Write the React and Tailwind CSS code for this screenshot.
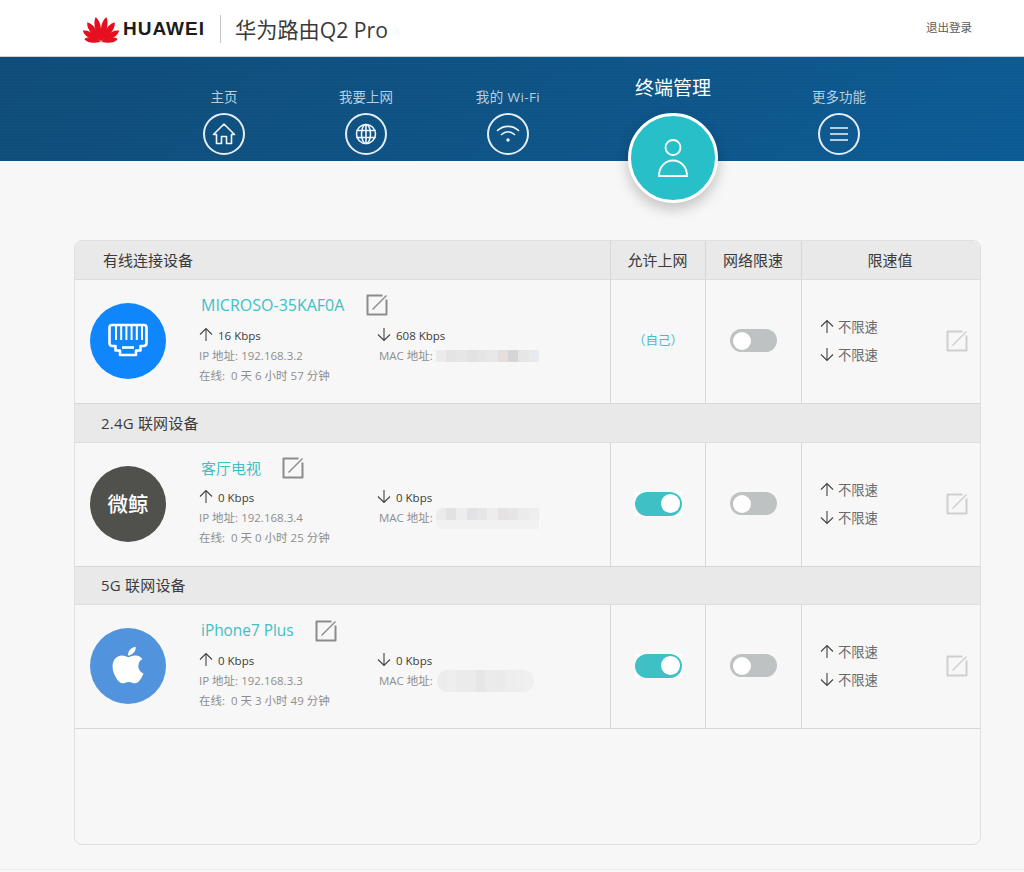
import React from "react";
import { FaApple } from "react-icons/fa";

function HuaweiLogo() {
  const petals = [
    [-12, 25.5, 4.4],
    [-35, 24, 4.6],
    [-58, 21.5, 4.4],
    [-80, 17, 3.6],
    [12, 25.5, 4.4],
    [35, 24, 4.6],
    [58, 21.5, 4.4],
    [80, 17, 3.6],
  ];
  return (
    <svg width="36" height="28" viewBox="0 0 36 28" className="shrink-0">
      {petals.map(([a, l, w], i) => (
        <path
          key={i}
          transform={`rotate(${a} 18 27)`}
          d={`M18 26.5 C${18 - w * 0.45} ${27 - l * 0.3} ${18 - w * 1.25} ${27 - l * 0.72} 18 ${27 - l} C${18 + w * 1.25} ${27 - l * 0.72} ${18 + w * 0.45} ${27 - l * 0.3} 18 26.5Z`}
          fill="#e60f20"
        />
      ))}
    </svg>
  );
}

function CircleIcon({ children }) {
  return (
    <div className="flex h-[42px] w-[42px] items-center justify-center rounded-full border-2 border-[#e4edf3]">
      {children}
    </div>
  );
}

const stroke = {
  fill: "none",
  stroke: "#eef4f8",
  strokeWidth: 1.6,
  strokeLinejoin: "round",
  strokeLinecap: "round",
};

function NavItem({ label, wide, children }) {
  return (
    <div className="flex w-[142px] flex-col items-center pt-[31px]">
      <span className={`h-[18px] text-[13.5px] leading-[18px] text-[#b9cfdf] ${wide ? "tracking-[0.4px]" : ""}`}>{label}</span>
      <div className="mt-[7px]">
        <CircleIcon>{children}</CircleIcon>
      </div>
    </div>
  );
}

function ArrowUp() {
  return (
    <svg width="14" height="15" viewBox="0 0 14 15" className="mb-[3px] shrink-0">
      <path d="M7 14V1.5M1 7.5L7 1.5L13 7.5" fill="none" stroke="#444" strokeWidth="1.1" />
    </svg>
  );
}
function ArrowDown() {
  return (
    <svg width="14" height="15" viewBox="0 0 14 15" className="mb-[3px] shrink-0">
      <path d="M7 1V13.5M1 7.5L7 13.5L13 7.5" fill="none" stroke="#444" strokeWidth="1.1" />
    </svg>
  );
}

function EditIcon({ color = "#8c8c8c" }) {
  return (
    <svg width="22" height="22" viewBox="0 0 22 22" className="shrink-0">
      <path d="M20.5 5.5V20.5H1.5V1.5H16.5" fill="none" stroke={color} strokeWidth="2" strokeLinejoin="round" />
      <path d="M6.5 15.5L20.5 1.5" fill="none" stroke={color} strokeWidth="1.4" />
    </svg>
  );
}

function Toggle({ on }) {
  if (on) {
    return (
      <div className="mb-[2px] bg-white">
        <div className="flex h-[24px] w-[47px] items-center justify-end rounded-full bg-[#3fc0c4] pr-[2px]">
          <div className="h-[19px] w-[19px] rounded-full bg-white" />
        </div>
      </div>
    );
  }
  return (
    <div className="mb-[2px] flex h-[23px] w-[47px] items-center rounded-full bg-[#bfc2c2] pl-[3px]">
      <div className="h-[18px] w-[18px] rounded-full bg-white" />
    </div>
  );
}

function MacBlur({ cells, shape }) {
  if (shape === "fade") {
    return (
      <div className="ml-[3px] flex h-[21px] w-[103px] flex-col overflow-hidden rounded-l-[8px] blur-[0.5px]">
        <div className="flex h-[12px]">
          {cells.map((c, i) => (
            <div key={i} className="h-full flex-1" style={{ backgroundColor: c }} />
          ))}
        </div>
        <div className="h-[9px] bg-[#f1f1f1]" />
      </div>
    );
  }
  if (shape === "pill") {
    return (
      <div className="ml-[4px] flex h-[22px] w-[97px] overflow-hidden rounded-full blur-[0.5px]">
        {cells.map((c, i) => (
          <div key={i} className="h-full flex-1" style={{ backgroundColor: c }} />
        ))}
      </div>
    );
  }
  return (
    <div className="ml-[3px] flex h-[12px] w-[103px] overflow-hidden blur-[0.5px]">
      {cells.map((c, i) => (
        <div key={i} className="h-full flex-1" style={{ backgroundColor: c }} />
      ))}
    </div>
  );
}

function DeviceRow({ avatar, name, nameClass, editGap, up, down, ip, online, self, on, cells, shape, top, gap }) {
  return (
    <div className="grid h-[124px] grid-cols-[536px_95px_96px_1fr] border-b border-[#d5d7d9]">
      <div className="flex border-r border-[#d5d7d9]">
        <div className="ml-[15px] mt-[23px] shrink-0">{avatar}</div>
        <div className={`ml-[33px] flex-1 ${top}`}>
          <div className="flex h-[22px] items-center pl-[2px]">
            <span className={`leading-[22px] text-[#3fc0c6] ${nameClass}`}>{name}</span>
            <div className={editGap}>
              <EditIcon />
            </div>
          </div>
          <div className={`grid grid-cols-[178px_1fr] ${gap}`}>
            <div className="flex h-[20px] items-center gap-[5px] text-[11.5px] text-[#3c3c3c]">
              <ArrowUp />
              <span>{up} Kbps</span>
            </div>
            <div className="flex h-[20px] items-center gap-[5px] text-[11.5px] text-[#3c3c3c]">
              <ArrowDown />
              <span>{down} Kbps</span>
            </div>
            <div className="flex h-[20px] items-center text-[11.5px] text-[#8e8e8e]">IP 地址: {ip}</div>
            <div className="flex h-[20px] items-center pl-[2px] text-[11.5px] text-[#8e8e8e]">
              <span>MAC 地址:</span>
              <MacBlur cells={cells} shape={shape} />
            </div>
            <div className="col-span-2 flex h-[20px] items-center text-[11.5px] text-[#8e8e8e]">
              在线:&nbsp; 0 天 {online}
            </div>
          </div>
        </div>
      </div>
      <div className="flex items-center justify-center border-r border-[#d5d7d9]">
        {self ? <span className="text-[12.5px] text-[#3fc0c6]">（自己）</span> : <Toggle on={on} />}
      </div>
      <div className="flex items-center justify-center border-r border-[#d5d7d9]">
        <Toggle />
      </div>
      <div className="flex items-center justify-between pl-[18px] pr-[12px]">
        <div className="flex flex-col gap-[8px]">
          <div className="flex h-[20px] items-center gap-[4px] text-[13.3px] text-[#6a6a6a]">
            <ArrowUp />
            <span>不限速</span>
          </div>
          <div className="flex h-[20px] items-center gap-[4px] text-[13.3px] text-[#6a6a6a]">
            <ArrowDown />
            <span>不限速</span>
          </div>
        </div>
        <div className="mb-[2px]">
          <EditIcon color="#cfcfcf" />
        </div>
      </div>
    </div>
  );
}

function Section({ height, children }) {
  return (
    <div className={`flex ${height} items-center border-b border-[#dcdee0] bg-[#e9e9e9] pl-[26px] text-[15px] tracking-[0.2px] text-[#3c3c3c]`}>
      {children}
    </div>
  );
}

function Avatar({ bg, children }) {
  return (
    <div className={`flex h-[76px] w-[76px] items-center justify-center rounded-full ${bg}`}>{children}</div>
  );
}

export default function App() {
  return (
    <div className="h-[872px] overflow-hidden bg-[#f7f7f7] font-['Open_Sans','Noto_Sans_CJK_SC',sans-serif]">
      <header className="flex h-[57px] items-center justify-between border-b border-[#c9d2d9] bg-white pl-[83px] pr-[52px]">
        <div className="flex items-center pt-[3px]">
          <HuaweiLogo />
          <span className="ml-[4px] font-['Liberation_Sans',sans-serif] text-[19px] font-bold tracking-[1px] text-[#1c1c1c]">HUAWEI</span>
          <div className="ml-[15px] h-[28px] w-px bg-[#c4c4c4]" />
          <span className="ml-[14px] text-[21.2px] text-[#3a3a3a]">华为路由Q2 Pro</span>
        </div>
        <span className="text-[11.5px] text-[#5a5a5a]">退出登录</span>
      </header>

      <nav className="flex h-[104px] bg-[linear-gradient(rgba(255,255,255,0.015)_1px,transparent_1px),linear-gradient(90deg,rgba(0,0,0,0.012)_1px,transparent_1px),linear-gradient(135deg,#0f4c78,#0c5b95)] bg-[size:100%_3px,4px_100%,100%_100%] pl-[153px]">
        <NavItem label="主页">
          <svg width="26" height="26" viewBox="0 0 26 26" {...stroke}>
            <path d="M2.5 13.5L13 3L23.5 13.5H20.5V22.5H15.5V15.5H10.5V22.5H5.5V13.5Z" />
          </svg>
        </NavItem>
        <NavItem label="我要上网">
          <svg width="22" height="22" viewBox="0 0 22 22" {...stroke}>
            <circle cx="11" cy="11" r="9.5" />
            <ellipse cx="11" cy="11" rx="4.5" ry="9.5" />
            <path d="M11 1.5V20.5M2 7.5H20M2 14.5H20" />
          </svg>
        </NavItem>
        <NavItem label="我的 Wi-Fi" wide>
          <svg width="24" height="22" viewBox="0 0 24 22" {...stroke}>
            <path d="M1.5 7.5C7.5 2 16.5 2 22.5 7.5" />
            <path d="M5.5 11.5C9.5 8 14.5 8 18.5 11.5" />
            <circle cx="12" cy="17" r="1.7" fill="#eef4f8" stroke="none" />
          </svg>
        </NavItem>
        <div className="mr-px flex w-[188px] flex-col items-center pt-[19px]">
          <span className="h-[24px] text-[19px] leading-[24px] text-white">终端管理</span>
          <div className="mt-[13px] flex h-[90px] w-[90px] shrink-0 items-center justify-center rounded-full border-[3px] border-white bg-[#28c0c8] shadow-[0_6px_14px_rgba(0,0,0,0.22)]">
            <svg width="30" height="38" viewBox="0 0 30 38" fill="none" stroke="#fff" strokeWidth="1.8">
              <circle cx="15" cy="8.5" r="7.5" />
              <path d="M1 37C1 28 7 21.5 15 21.5C23 21.5 29 28 29 37Z" />
            </svg>
          </div>
        </div>
        <NavItem label="更多功能">
          <svg width="20" height="16" viewBox="0 0 20 16" {...stroke} strokeLinecap="butt">
            <path d="M1 2H19M1 8H19M1 14H19" />
          </svg>
        </NavItem>
      </nav>

      <main className="ml-[74px] mt-[79px] h-[605px] w-[907px] overflow-hidden rounded-[8px] border border-[#dcdfe3]">
        <div className="grid h-[39px] grid-cols-[536px_95px_96px_1fr] border-b border-[#d9dce0] bg-[#e9e9e9] text-[15px] text-[#3a3a3a]">
          <div className="flex items-center border-r border-[#d5d7d9] pl-[28px]">有线连接设备</div>
          <div className="flex items-center justify-center border-r border-[#d5d7d9] pr-px">允许上网</div>
          <div className="flex items-center justify-center border-r border-[#d5d7d9] pr-px">网络限速</div>
          <div className="flex items-center justify-center pr-[2px]">限速值</div>
        </div>

        <DeviceRow
          top="pt-[14px]"
          gap="mt-[10px]"
          avatar={
            <Avatar bg="bg-[#0f86fb]">
              <svg width="40" height="36" viewBox="0 0 40 36" fill="none" stroke="#fff" strokeWidth="2.6" strokeLinejoin="round">
                <path d="M4 2H36Q38.5 2 38.5 4.5V20Q38.5 23 35.5 23H32.5V27.5H28V32H12V27.5H7.5V23H4.5Q1.5 23 1.5 20V4.5Q1.5 2 4 2Z" />
                <path d="M8 3V17M13.2 3V17M18.4 3V17M23.6 3V17M28.8 3V17M34 3V17" strokeWidth="2" />
                <path d="M14 24.5H26" />
              </svg>
            </Avatar>
          }
          name="MICROSO-35KAF0A"
          nameClass="text-[16px]"
          editGap="ml-[22px]"
          up="16"
          down="608"
          ip="192.168.3.2"
          online="6 小时 57 分钟"
          self
          cells={["#ebebeb", "#e4e4e4", "#e6e6e6", "#e2e2e2", "#e5e5e5", "#e8e8e8", "#e4dfdc", "#d5d5d5", "#e6e6e6", "#e9eaed"]}
        />

        <Section height="h-[39px]">2.4G 联网设备</Section>

        <DeviceRow
          top="pt-[14px]"
          gap="mt-[9px]"
          avatar={
            <Avatar bg="bg-[#50504c]">
              <span className="text-[20.5px] font-medium text-white">微鲸</span>
            </Avatar>
          }
          name="客厅电视"
          nameClass="text-[15px]"
          editGap="ml-[21px]"
          up="0"
          down="0"
          ip="192.168.3.4"
          online="0 小时 25 分钟"
          on
          shape="fade"
          cells={["#ebebeb", "#e2e2e5", "#ededed", "#e2e2e5", "#e6e6e6", "#ededed", "#e4e2e2", "#e5e5e5", "#ebebeb", "#eeeeee"]}
        />

        <Section height="h-[38px]">5G 联网设备</Section>

        <DeviceRow
          top="pt-[15px]"
          gap="mt-[9px]"
          avatar={
            <Avatar bg="bg-[#5193dc]">
              <FaApple className="mb-[3px] text-[42px] text-white" />
            </Avatar>
          }
          name="iPhone7 Plus"
          nameClass="text-[15.4px]"
          editGap="ml-[21px]"
          up="0"
          down="0"
          ip="192.168.3.3"
          online="3 小时 49 分钟"
          on
          shape="pill"
          cells={["#ececec", "#eeeeee", "#ebebeb", "#ebebeb", "#e6e6e6", "#ebebeb", "#eaeaea", "#ededed", "#eeeeee", "#f0f0f0"]}
        />
      </main>

      <div className="mt-[24px] h-[3px] border-t border-[#ececec]" />
    </div>
  );
}
